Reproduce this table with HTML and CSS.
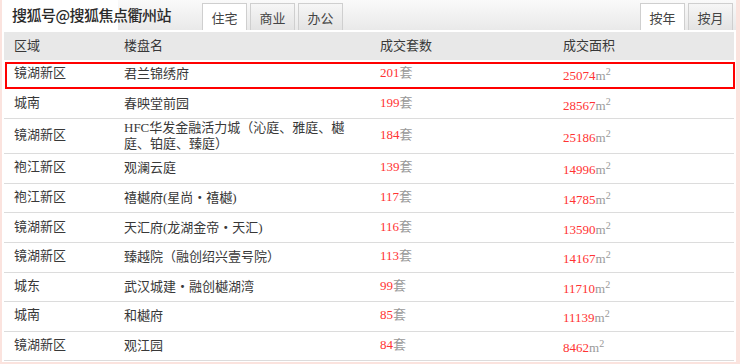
FILE: index.html
```html
<!DOCTYPE html>
<html lang="zh-CN">
<head>
<meta charset="utf-8">
<title>成交排行</title>
<link rel="stylesheet" href="styles.css">
</head>
<body>
<div class="panel">
  <div class="topbar">
    <div class="tabs">
      <span class="tab on">住宅</span>
      <span class="tab">商业</span>
      <span class="tab">办公</span>
    </div>
    <div class="tabs">
      <span class="tab on">按年</span>
      <span class="tab">按月</span>
    </div>
    <div class="watermark">搜狐号@搜狐焦点衢州站</div>
  </div>
  <div class="table">
    <div class="row head"><div>区域</div><div>楼盘名</div><div>成交套数</div><div>成交面积</div></div>
    <div class="row hl"><div>镜湖新区</div><div class="name">君兰锦绣府</div><div><span class="num">201</span><span class="unit">套</span></div><div class="area"><span class="num">25074</span><span class="unit">m<sup>2</sup></span></div></div>
    <div class="row"><div>城南</div><div class="name">春映堂前园</div><div><span class="num">199</span><span class="unit">套</span></div><div class="area"><span class="num">28567</span><span class="unit">m<sup>2</sup></span></div></div>
    <div class="row"><div>镜湖新区</div><div class="name">HFC华发金融活力城（沁庭、雅庭、樾庭、铂庭、臻庭）</div><div><span class="num">184</span><span class="unit">套</span></div><div class="area"><span class="num">25186</span><span class="unit">m<sup>2</sup></span></div></div>
    <div class="row"><div>袍江新区</div><div class="name">观澜云庭</div><div><span class="num">139</span><span class="unit">套</span></div><div class="area"><span class="num">14996</span><span class="unit">m<sup>2</sup></span></div></div>
    <div class="row"><div>袍江新区</div><div class="name">禧樾府(星尚<span class="dot">·</span>禧樾)</div><div><span class="num">117</span><span class="unit">套</span></div><div class="area"><span class="num">14785</span><span class="unit">m<sup>2</sup></span></div></div>
    <div class="row"><div>镜湖新区</div><div class="name">天汇府(龙湖金帝<span class="dot">·</span>天汇)</div><div><span class="num">116</span><span class="unit">套</span></div><div class="area"><span class="num">13590</span><span class="unit">m<sup>2</sup></span></div></div>
    <div class="row"><div>镜湖新区</div><div class="name">臻越院（融创绍兴壹号院）</div><div><span class="num">113</span><span class="unit">套</span></div><div class="area"><span class="num">14167</span><span class="unit">m<sup>2</sup></span></div></div>
    <div class="row"><div>城东</div><div class="name">武汉城建<span class="dot">·</span>融创樾湖湾</div><div><span class="num">99</span><span class="unit">套</span></div><div class="area"><span class="num">11710</span><span class="unit">m<sup>2</sup></span></div></div>
    <div class="row"><div>城南</div><div class="name">和樾府</div><div><span class="num">85</span><span class="unit">套</span></div><div class="area"><span class="num">11139</span><span class="unit">m<sup>2</sup></span></div></div>
    <div class="row"><div>镜湖新区</div><div class="name">观江园</div><div><span class="num">84</span><span class="unit">套</span></div><div class="area"><span class="num">8462</span><span class="unit">m<sup>2</sup></span></div></div>
  </div>
</div>
</body>
</html>
```

FILE: styles.css
```css
html, body {
  margin: 0;
  padding: 0;
}
body {
  width: 740px;
  height: 364px;
  overflow: hidden;
  background: #fbe3de;
  font-family: "Liberation Serif", "Noto Sans CJK SC", serif;
  font-size: 13px;
  color: #383838;
}
.panel {
  position: relative;
  margin-left: 2px;
  width: 734px;
  height: 362px;
  background: #fff;
  overflow: hidden;
}
.topbar {
  position: relative;
  height: 30px;
  background: linear-gradient(#fafafa, #e9e9e9);
  display: flex;
  align-items: flex-end;
  justify-content: space-between;
  padding: 0 3px 0 200px;
}
.tabs {
  display: flex;
  gap: 3px;
}
.tab {
  width: 45px;
  height: 27px;
  box-sizing: border-box;
  border: 1px solid #cfcfcf;
  border-bottom: none;
  background: linear-gradient(#f6f6f6, #e3e3e3);
  display: flex;
  align-items: center;
  justify-content: center;
  font-family: "Noto Sans CJK SC", sans-serif;
  font-size: 13px;
  color: #444;
}
.tab.on {
  background: #fff;
}
.watermark {
  position: absolute;
  left: 0;
  top: 0;
  height: 30px;
  line-height: 30px;
  padding-left: 10px;
  background: linear-gradient(#fff, #fff) no-repeat 0 0 / 116px 100%;
  font-family: "Noto Sans CJK SC", sans-serif;
  font-size: 15px;
  letter-spacing: -0.5px;
  font-weight: 500;
  color: #2a2a2a;
}
.table {
  margin: 2px 2px 0 2px;
}
.row {
  position: relative;
  display: grid;
  grid-template-columns: 110px 256px 183px 181px;
  align-items: center;
  min-height: 28.6px;
  border-bottom: 1px solid #dcdcdc;
  line-height: 16px;
}
.row > div {
  padding-left: 10px;
  padding-bottom: 2px;
}
.row > .name {
  padding-right: 20px;
  padding-top: 1px;
  padding-bottom: 1px;
}
.row > .area {
  padding-top: 4px;
  padding-bottom: 0;
}
.head {
  background: #e8e8e8;
  border-bottom: none;
  min-height: 28px;
}
.head > div {
  padding-bottom: 0;
}
.hl {
  border-bottom-color: transparent;
}
.hl::after {
  content: "";
  position: absolute;
  top: 2px;
  bottom: 0;
  left: 1px;
  right: -1px;
  border: 2px solid #f00;
}
.num {
  color: #ff3333;
}
.unit {
  color: #999;
}
.unit sup {
  font-size: 10px;
  line-height: 0;
  vertical-align: 5px;
}
.dot {
  display: inline-block;
  width: 13px;
  text-align: center;
  font-size: 18px;
  font-weight: bold;
  line-height: 16px;
  vertical-align: top;
}
```
